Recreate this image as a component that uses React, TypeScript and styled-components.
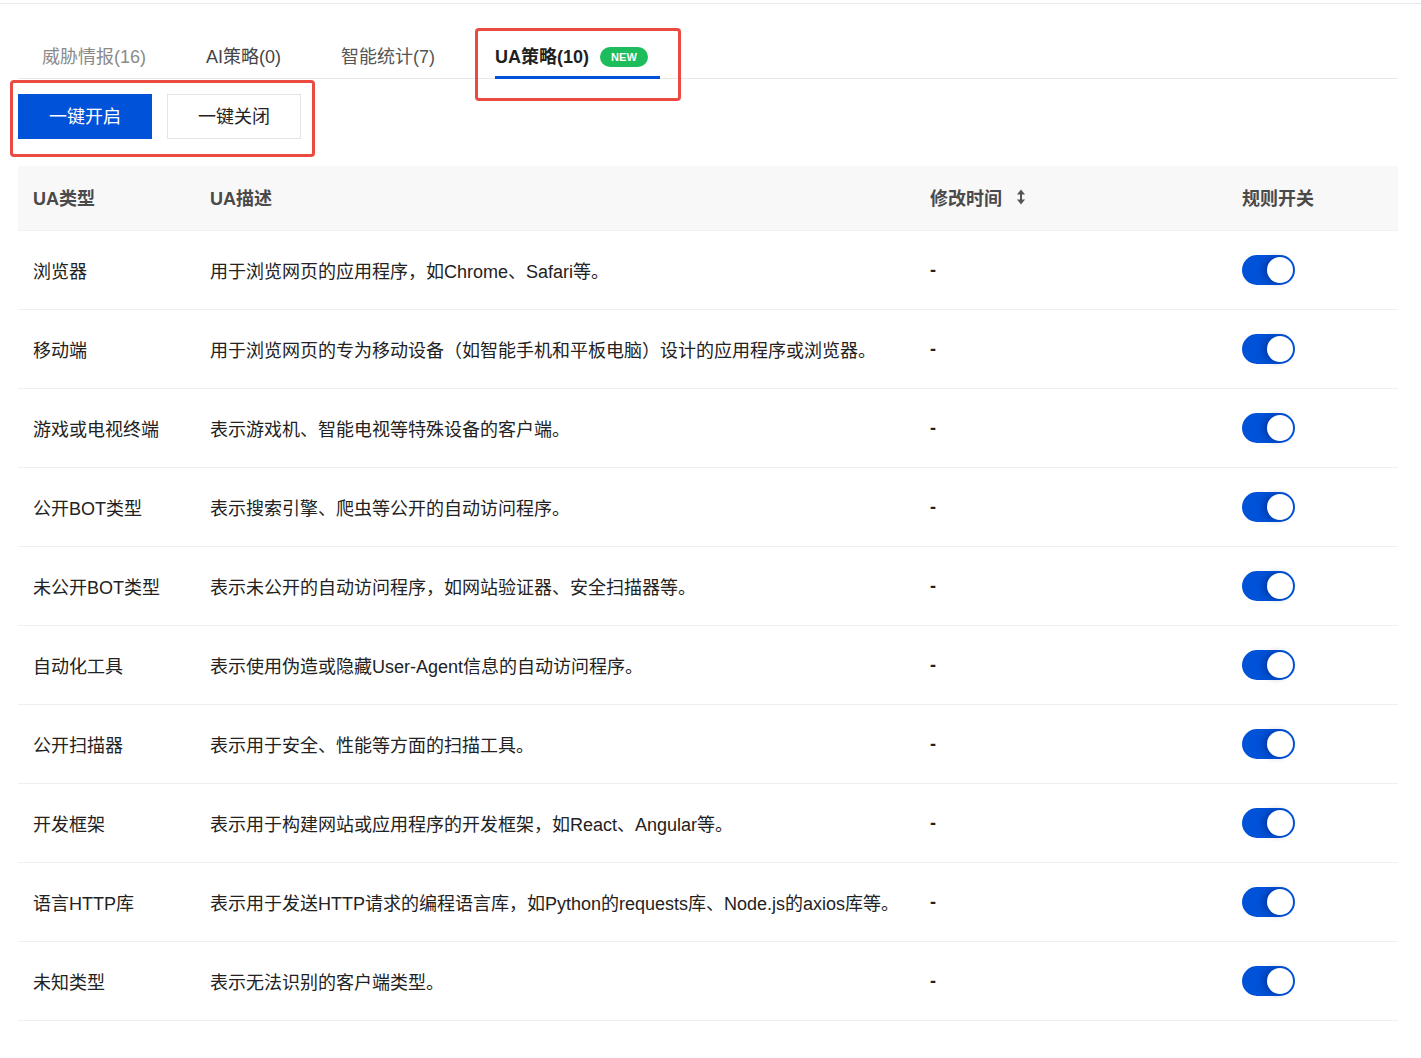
import React from "react";
import styled, { createGlobalStyle } from "styled-components";

const Global = createGlobalStyle`
  html, body { margin: 0; padding: 0; background: #fff; }
  body { font-family: "Liberation Sans", "Noto Sans CJK SC", Roboto, sans-serif; color: #222; }
  * { box-sizing: border-box; }
`;

const Page = styled.div`
  position: relative;
  margin-top: 3px;
  border-top: 1px solid #e9e9ec;
  padding: 0 23px 0 18px;
  min-height: 1054px;
`;

const TabBar = styled.div`
  display: flex;
  gap: 48px;
  padding-left: 24px;
  border-bottom: 1px solid #e7e7ec;
  height: 75px;
`;

const Tab = styled.div<{ $active?: boolean; $tone?: string }>`
  position: relative;
  display: flex;
  align-items: center;
  gap: 11px;
  padding: 31px 12px 0 0;
  font-size: 18px;
  line-height: 24px;
  color: ${(p) => (p.$active ? "#1f1f1f" : p.$tone || "#7a7a7a")};
  font-weight: ${(p) => (p.$active ? 700 : 400)};
  ${(p) =>
    p.$active &&
    `&::after {
      content: "";
      position: absolute;
      left: 0; right: 0; bottom: -1px;
      height: 3px;
      background: #0052d9;
    }`}
`;

const Badge = styled.span`
  display: inline-flex;
  align-items: center;
  justify-content: center;
  width: 48px;
  height: 20px;
  border-radius: 10px;
  background: #1dbd5e;
  color: #fff;
  font-size: 11px;
  font-weight: 700;
  font-family: "Liberation Sans", Roboto, sans-serif;
  letter-spacing: 0.2px;
`;

const Toolbar = styled.div`
  display: flex;
  gap: 15px;
  padding: 15px 0 27px;
`;

const Button = styled.button<{ $primary?: boolean }>`
  width: 134px;
  height: 45px;
  font-size: 18px;
  font-family: inherit;
  border: 1px solid ${(p) => (p.$primary ? "#0052d9" : "#e3e3e8")};
  background: ${(p) => (p.$primary ? "#0052d9" : "#fff")};
  color: ${(p) => (p.$primary ? "#fff" : "#222")};
  border-radius: 0;
  padding: 0 0 3px;
  cursor: pointer;
`;

const Table = styled.div`
  display: grid;
  grid-template-columns: 177px 720px 312px 1fr;
`;

const HeadCell = styled.div`
  display: flex;
  align-items: center;
  gap: 12px;
  height: 65px;
  padding: 0 0 2px 15px;
  background: #f8f8f8;
  border-bottom: 1px solid #f0f0f2;
  font-size: 18px;
  font-weight: 700;
  color: #4a4a4a;
`;

const Cell = styled.div`
  display: flex;
  align-items: center;
  height: 79px;
  padding-left: 15px;
  border-bottom: 1px solid #efeff3;
  font-size: 18px;
  color: #222;
  white-space: nowrap;
`;

const Dash = styled.span`
  font-weight: 700;
  color: #222;
`;

const Switch = styled.div<{ $on: boolean }>`
  position: relative;
  width: 53px;
  height: 30px;
  border-radius: 15px;
  background: ${(p) => (p.$on ? "#0052d9" : "#c5c5c5")};
  &::after {
    content: "";
    position: absolute;
    top: 2px;
    left: ${(p) => (p.$on ? "25px" : "2px")};
    width: 26px;
    height: 26px;
    border-radius: 50%;
    background: #fff;
    box-shadow: -4px 0 6px rgba(0, 20, 80, 0.35);
  }
`;

const Annotation = styled.div`
  position: absolute;
  border: 3px solid #ea4a3f;
  border-radius: 4px;
  pointer-events: none;
`;

const SortIcon = () => (
  <svg width="10" height="18" viewBox="0 0 10 18" style={{ marginLeft: 2 }}>
    <path d="M5 1.5 L9 6.5 H1 Z" fill="#555" />
    <path d="M5 16.5 L9 11.5 H1 Z" fill="#555" />
    <rect x="4" y="5" width="2" height="8" fill="#555" />
  </svg>
);

const rows: [string, string][] = [
  ["浏览器", "用于浏览网页的应用程序，如Chrome、Safari等。"],
  ["移动端", "用于浏览网页的专为移动设备（如智能手机和平板电脑）设计的应用程序或浏览器。"],
  ["游戏或电视终端", "表示游戏机、智能电视等特殊设备的客户端。"],
  ["公开BOT类型", "表示搜索引擎、爬虫等公开的自动访问程序。"],
  ["未公开BOT类型", "表示未公开的自动访问程序，如网站验证器、安全扫描器等。"],
  ["自动化工具", "表示使用伪造或隐藏User-Agent信息的自动访问程序。"],
  ["公开扫描器", "表示用于安全、性能等方面的扫描工具。"],
  ["开发框架", "表示用于构建网站或应用程序的开发框架，如React、Angular等。"],
  ["语言HTTP库", "表示用于发送HTTP请求的编程语言库，如Python的requests库、Node.js的axios库等。"],
  ["未知类型", "表示无法识别的客户端类型。"],
];

export default function App() {
  return (
    <>
      <Global />
      <Page>
        <TabBar>
          <Tab $tone="#8a8a8a">威胁情报(16)</Tab>
          <Tab $tone="#444">AI策略(0)</Tab>
          <Tab $tone="#555">智能统计(7)</Tab>
          <Tab $active>
            UA策略(10)
            <Badge>NEW</Badge>
          </Tab>
        </TabBar>
        <Toolbar>
          <Button $primary>一键开启</Button>
          <Button>一键关闭</Button>
        </Toolbar>
        <Table>
          <HeadCell>UA类型</HeadCell>
          <HeadCell>UA描述</HeadCell>
          <HeadCell>
            修改时间 <SortIcon />
          </HeadCell>
          <HeadCell>规则开关</HeadCell>
          {rows.map(([t, d]) => (
            <React.Fragment key={t}>
              <Cell>{t}</Cell>
              <Cell>{d}</Cell>
              <Cell>
                <Dash>-</Dash>
              </Cell>
              <Cell>
                <Switch $on />
              </Cell>
            </React.Fragment>
          ))}
        </Table>
        <Annotation style={{ left: 475, top: 24, width: 206, height: 73 }} />
        <Annotation style={{ left: 10, top: 76, width: 305, height: 77 }} />
      </Page>
    </>
  );
}
